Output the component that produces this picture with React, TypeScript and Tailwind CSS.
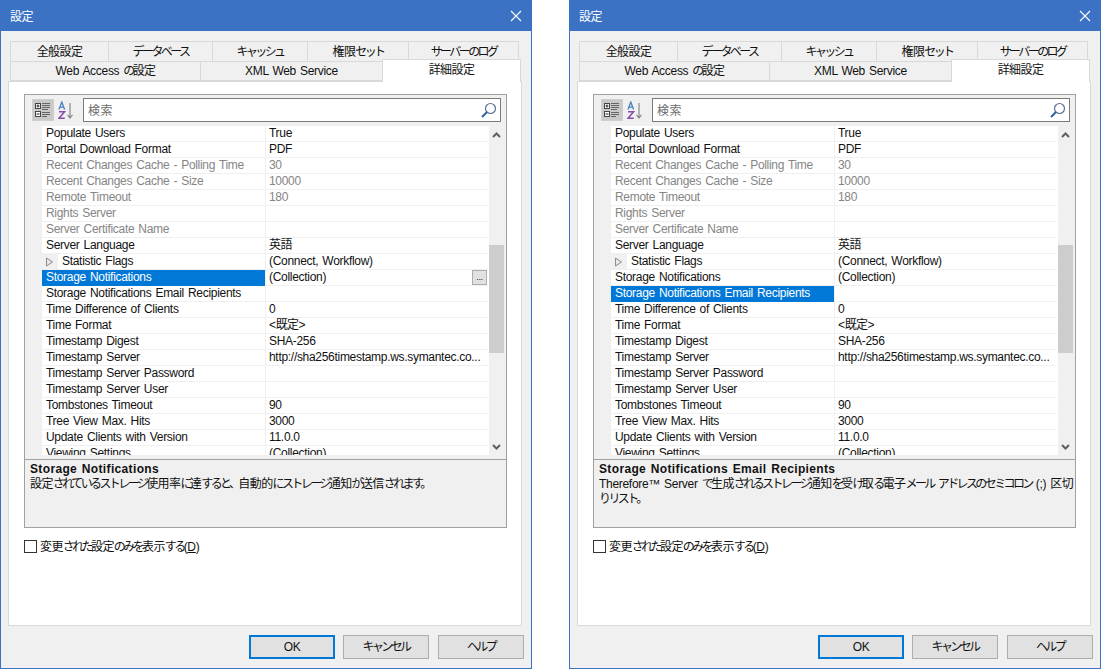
import React from 'react';

const cjk = '"Liberation Sans", "Noto Sans CJK JP", sans-serif';

interface Row {
  name: string;
  value: string;
  disabled?: boolean;
  expandable?: boolean;
}

const rows: Row[] = [
  { name: 'Populate Users', value: 'True' },
  { name: 'Portal Download Format', value: 'PDF' },
  { name: 'Recent Changes Cache - Polling Time', value: '30', disabled: true },
  { name: 'Recent Changes Cache - Size', value: '10000', disabled: true },
  { name: 'Remote Timeout', value: '180', disabled: true },
  { name: 'Rights Server', value: '', disabled: true },
  { name: 'Server Certificate Name', value: '', disabled: true },
  { name: 'Server Language', value: '英語' },
  { name: 'Statistic Flags', value: '(Connect, Workflow)', expandable: true },
  { name: 'Storage Notifications', value: '(Collection)' },
  { name: 'Storage Notifications Email Recipients', value: '' },
  { name: 'Time Difference of Clients', value: '0' },
  { name: 'Time Format', value: '<既定>' },
  { name: 'Timestamp Digest', value: 'SHA-256' },
  { name: 'Timestamp Server', value: 'http://sha256timestamp.ws.symantec.co...' },
  { name: 'Timestamp Server Password', value: '' },
  { name: 'Timestamp Server User', value: '' },
  { name: 'Tombstones Timeout', value: '90' },
  { name: 'Tree View Max. Hits', value: '3000' },
  { name: 'Update Clients with Version', value: '11.0.0' },
  { name: 'Viewing Settings', value: '(Collection)' },
];

const topTabs = [
  { label: '全般設定', width: 'w-[98px]' },
  { label: 'データベース', width: 'w-[104px]' },
  { label: 'キャッシュ', width: 'w-[95px]' },
  { label: '権限セット', width: 'w-[101px]' },
  { label: 'サーバーのログ', width: 'w-[111px]' },
];

// the reference's UI font sets kana much narrower than kanji
const Jp = ({ text }: { text: string }) => (
  <>
    {text.split(/([\u3040-\u30ff、。]+|[\u4e00-\u9fff]+)/).map((part, i) => {
      if (/^[\u3040-\u30ff、。]/.test(part)) return <span key={i} className="tracking-[-2.6px]">{part}</span>;
      if (/^[\u4e00-\u9fff]/.test(part)) return <span key={i} className="tracking-[-0.6px]">{part}</span>;
      return <span key={i}>{part}</span>;
    })}
  </>
);

const CategoryIcon = () => (
  <svg width="16" height="16" viewBox="0 0 16 16" fill="none">
    <rect x="0.5" y="1.5" width="5" height="5" fill="#fff" stroke="#444" />
    <path d="M1.500 4h3M3 2.500v3" stroke="#222" />
    <rect x="0.5" y="9.5" width="5" height="5" fill="#fff" stroke="#444" />
    <path d="M1.500 12h3" stroke="#222" />
    <path d="M7 1.500h8M7 3.500h8M7 5.500h8M7 7.500h6M7 10.500h8M7 12.500h8M7 14.500h5" stroke="#666" />
  </svg>
);

const SortIcon = () => (
  <svg width="16" height="19" viewBox="0 0 16 19" fill="none">
    <path d="M1 8.500l2.800-7.500 2.800 7.500M2 6.200h3.600" stroke="#4a7fc0" strokeWidth="1.300" />
    <path d="M1 10.800h5.500l-5.500 6.500h5.800" stroke="#8a4fa8" strokeWidth="1.600" />
    <path d="M12 2v15M9.500 13.800l2.500 3.200 2.500-3.200" stroke="#8a8a8a" strokeWidth="1.200" />
  </svg>
);

const SearchIcon = () => (
  <svg width="16" height="16" viewBox="0 0 16 16" fill="none">
    <circle cx="9.500" cy="6.500" r="5" stroke="#5a7496" strokeWidth="1.200" />
    <path d="M6 10L1 15" stroke="#2f62a0" strokeWidth="2" />
  </svg>
);

const PropertyRow = ({ row, selected, showButton }: { row: Row; selected: boolean; showButton: boolean }) => (
  <div className="flex h-4 shrink-0">
    <div className="w-[17px] shrink-0" />
    {row.expandable && (
      <div className="w-4 -ml-[1px] mr-[1px] shrink-0 flex items-center justify-center">
        <svg width="9" height="10" viewBox="0 0 9 10" fill="none">
          <path d="M1.500 1l6 4-6 4z" fill="#e8e8e8" stroke="#8c8c8c" />
        </svg>
      </div>
    )}
    <div
      className={`${row.expandable ? 'w-[207px]' : 'w-[223px]'} shrink-0 pl-[4px] leading-[15px] whitespace-nowrap overflow-hidden ${
        selected ? 'bg-[#0078d7] text-white h-4' : 'bg-white h-[15px] mb-[1px]'
      } ${!selected && row.disabled ? 'text-[#858585]' : ''} ${!selected && !row.disabled ? 'text-[#111]' : ''}`}
    >
      {row.name}
    </div>
    <div className="w-[1px] shrink-0" />
    <div
      className={`w-[222px] shrink-0 h-[15px] pl-[3px] bg-white leading-[15px] relative whitespace-nowrap ${
        row.disabled ? 'text-[#858585]' : 'text-[#111]'
      }`}
    >
      <Jp text={row.value} />
      {showButton && (
        <button className="absolute right-[1px] top-0 w-[15px] h-[15px] bg-[#e1e1e1] border border-[#adadad] text-[9px] leading-[9px] text-[#111]">
          ...
        </button>
      )}
    </div>
    <div className="w-[1px] shrink-0 bg-white" />
  </div>
);

const SettingsWindow = ({
  selectedName,
  title,
  description,
  showButton,
}: {
  selectedName: string;
  title: string;
  description: React.ReactNode;
  showButton: boolean;
}) => (
  <div className="w-[532px] h-[669px] shrink-0 bg-[#f0f0f0] border border-[#3b72c4] flex flex-col text-[12px] text-[#111] tracking-[-0.3px] [word-spacing:1px]">
    <div className="h-[30px] shrink-0 bg-[#3b72c4] flex items-center justify-between pl-[9px] pr-[9px] text-white">
      <span className="pt-[1px]"><Jp text="設定" /></span>
      <svg width="12" height="12" viewBox="0 0 12 12" fill="none">
        <path d="M1 1l10 10M11 1L1 11" stroke="#fff" strokeWidth="1.100" />
      </svg>
    </div>

    <div className="pt-[10px] pl-[7px] pr-[9px] flex flex-col">
      <div className="flex pl-[2px] h-5">
        {topTabs.map((tab) => (
          <div
            key={tab.label}
            className={`${tab.width} border border-r-0 last:border-r border-b-0 border-[#d9d9d9] flex items-center justify-center whitespace-nowrap`}
          >
            <span><Jp text={tab.label} /></span>
          </div>
        ))}
      </div>
      <div className="flex pl-[2px] h-5 relative z-10">
        <div className="w-[190px] border border-r-0 border-[#d9d9d9] flex items-center justify-center whitespace-nowrap">
          <span><Jp text="Web Access の設定" /></span>
        </div>
        <div className="w-[182px] border border-r-0 border-[#d9d9d9] flex items-center justify-center">XML Web Service</div>
        <div className="w-[139px] h-[23px] -mt-[2px] pb-[3px] bg-white border border-b-0 border-[#d9d9d9] flex items-center justify-center">
          <span><Jp text="詳細設定" /></span>
        </div>
      </div>

      <div className="h-[545px] bg-white border border-[#d9d9d9] pl-[15px] pt-[12px]">
        <div className="w-[483px] h-[434px] bg-[#f0f0f0] border border-[#a0a0a0] flex flex-col">
          <div className="h-[31px] shrink-0 flex items-start pl-[7px] pt-[3px]">
            <div className="w-[22px] h-[22px] mt-[1px] bg-[#c9c9c9] border border-[#cfcfcf] flex items-center justify-center">
              <CategoryIcon />
            </div>
            <div className="w-[18px] h-[22px] ml-[3px] mt-[1px] flex items-center justify-center">
              <SortIcon />
            </div>
            <div className="w-[418px] h-6 ml-[8px] bg-white border border-[#7a7a7a] flex items-center justify-between pl-[4px] pr-[3px] text-[#6d6d6d]">
              <span className="pt-[1px] tracking-[0.5px]">検索</span>
              <SearchIcon />
            </div>
          </div>

          <div className="h-[329px] shrink-0 flex">
            <div className="w-[464px] shrink-0 flex flex-col overflow-hidden">
              {rows.map((row) => (
                <PropertyRow
                  key={row.name}
                  row={row}
                  selected={row.name === selectedName}
                  showButton={showButton && row.name === selectedName}
                />
              ))}
            </div>
            <div className="w-[15px] shrink-0 flex flex-col">
              <div className="h-[119px] shrink-0 pt-[6px] flex justify-center">
                <svg width="9" height="6" viewBox="0 0 9 6" fill="none">
                  <path d="M1 5l3.500-3.500L8 5" stroke="#606060" strokeWidth="2" />
                </svg>
              </div>
              <div className="h-[108px] shrink-0 bg-[#cdcdcd]" />
              <div className="flex-1 pb-[5px] flex justify-center items-end">
                <svg width="9" height="6" viewBox="0 0 9 6" fill="none">
                  <path d="M1 1l3.500 3.500L8 1" stroke="#606060" strokeWidth="2" />
                </svg>
              </div>
            </div>
          </div>

          <div className="mt-[4px] flex-1 border-t border-[#a0a0a0] pl-[5px] pt-[2px] leading-[15px] whitespace-nowrap">
            <div className="font-bold tracking-[0.35px]">{title}</div>
            <div>{description}</div>
          </div>
        </div>

        <label className="mt-[12px] flex items-center h-[13px]">
          <span className="w-[13px] h-[13px] bg-white border border-[#333]" />
          <span className="ml-[3px]">
            <Jp text="変更された設定のみを表示する" />(<span className="underline">D</span>)
          </span>
        </label>
      </div>

      <div className="mt-[9px] flex justify-end gap-2 -mr-[2px]">
        <button className="w-[86px] h-6 bg-[#e1e1e1] border-2 border-[#0078d7]">OK</button>
        <button className="w-[86px] h-6 bg-[#e1e1e1] border border-[#adadad]"><Jp text="キャンセル" /></button>
        <button className="w-[86px] h-6 ml-[1px] bg-[#e1e1e1] border border-[#adadad]"><Jp text="ヘルプ" /></button>
      </div>
    </div>
  </div>
);

export default function App() {
  return (
    <div className="flex gap-[37px] w-[1102px] h-[670px] bg-white overflow-hidden" style={{ fontFamily: cjk }}>
      <SettingsWindow
        selectedName="Storage Notifications"
        title="Storage Notifications"
        description={<Jp text="設定されているストレージ使用率に達すると、自動的にストレージ通知が送信されます。" />}
        showButton
      />
      <SettingsWindow
        selectedName="Storage Notifications Email Recipients"
        title="Storage Notifications Email Recipients"
        description={
          <>
            <Jp text="Therefore™ Server で生成されるストレージ通知を受け取る電子メール アドレスのセミコロン (;) 区切" />
            <br />
            <Jp text="りリスト。" />
          </>
        }
        showButton={false}
      />
    </div>
  );
}
